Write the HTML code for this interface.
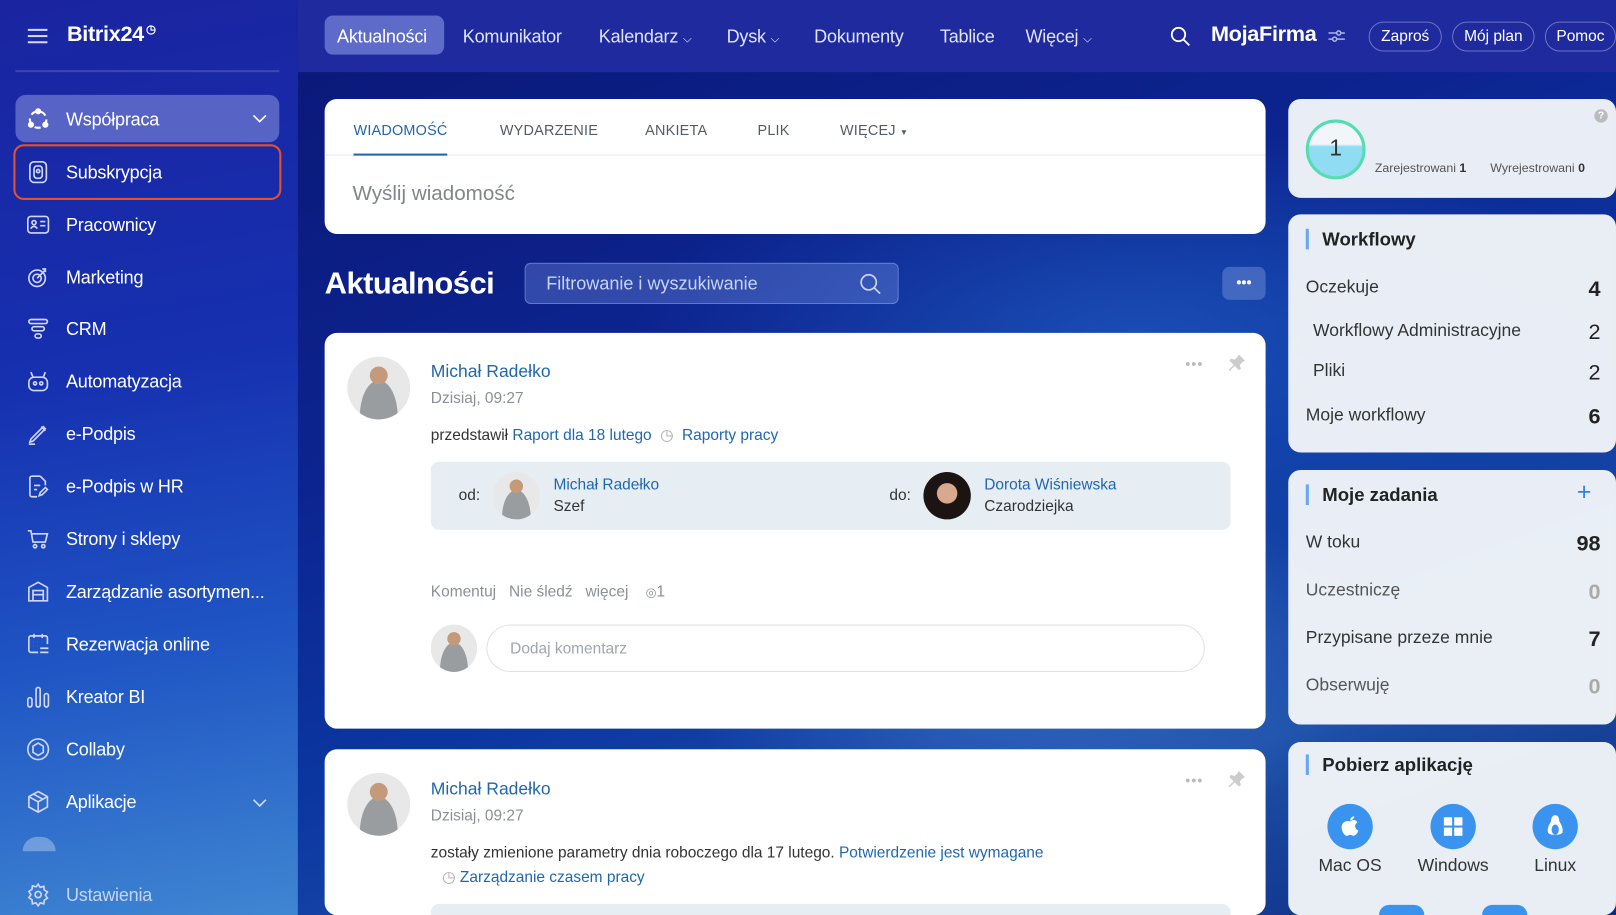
<!DOCTYPE html>
<html><head><meta charset="utf-8">
<style>
*{box-sizing:border-box;margin:0;padding:0}
html,body{width:1616px;height:915px;overflow:hidden;background:#0c1f8a;font-family:"Liberation Sans",sans-serif}
#w{position:absolute;left:0;top:0;width:1568px;height:888px;transform:scale(1.03061);transform-origin:0 0;overflow:hidden;
background:radial-gradient(ellipse 500px 260px at 1000px 640px,rgba(90,150,230,.45),transparent 70%),
radial-gradient(ellipse 700px 300px at 1100px 330px,rgba(40,110,210,.5),transparent 70%),
linear-gradient(160deg,#0a1470 0%,#0c2490 40%,#0b36a0 60%,#1d4fa8 80%,#0d2a80 100%)}
.abs{position:absolute}
#side{left:0;top:0;width:289px;height:888px;background:linear-gradient(170deg,#1a24a0 0%,#1630b0 40%,#1f55c4 70%,#3f86d2 100%)}
.mi{position:absolute;left:25px;height:24px;color:#fff;font-size:17.5px;line-height:24px;display:flex;align-items:center;letter-spacing:-.2px}
.mi svg{width:24px;height:24px;margin-right:15px;flex:none}
#top{left:289px;top:0;width:1279px;height:70px;background:#1e2a9e}
.nav{position:absolute;top:24px;color:#dfe3ff;font-size:17.5px;line-height:22px;letter-spacing:-.2px}
.pill{position:absolute;top:21px;height:29px;border:1px solid rgba(255,255,255,.35);border-radius:15px;color:#fff;font-size:15px;line-height:27px;text-align:center}
.card{position:absolute;background:#fff;border-radius:12px;overflow:hidden}
.rc{position:absolute;background:rgba(243,246,249,.96);border-radius:12px;overflow:hidden}
.blue{color:#2067b0}
.tab{position:absolute;top:22px;font-size:14px;color:#535c69;letter-spacing:.2px}
.row{position:absolute;left:17px;right:15px;font-size:17px;color:#333;display:flex;justify-content:space-between}
.row b{font-size:21px;font-weight:normal;color:#222}
.hd{position:absolute;left:17px;font-size:18px;font-weight:bold;color:#222;padding-left:13px;border-left:3px solid #6aa7f2;line-height:20px}
.av{position:absolute;border-radius:50%;background:radial-gradient(circle at 50% 30%,#c49a7a 0 16%,transparent 17%),radial-gradient(ellipse at 50% 95%,#9a9da0 0 42%,transparent 43%),#e8e8e8;overflow:hidden}
.app{position:absolute;top:60px;width:44px;height:44px;border-radius:50%;background:#3b93f0}
.al{position:absolute;top:110px;font-size:17px;color:#333;width:90px;text-align:center}
.dots{position:absolute;color:#bbb;font-size:14px;letter-spacing:1px}
</style></head><body><div id="w">
<div id="side" class="abs">
 <div class="abs" style="left:27px;top:28px;width:19px;height:2px;background:#cfd6ff;box-shadow:0 6px 0 #cfd6ff,0 12px 0 #cfd6ff"></div>
 <div class="abs" style="left:65px;top:22px;color:#fff;font-size:21px;font-weight:bold;letter-spacing:-.3px">Bitrix24<span style="font-size:11px;vertical-align:top;margin-left:2px">◷</span></div>
 <div class="abs" style="left:15px;top:68px;width:256px;height:2px;background:rgba(255,255,255,.15)"></div>
 <div class="abs" style="left:15px;top:92px;width:256px;height:46px;border-radius:10px;background:rgba(150,160,230,.5)"></div>
 <div class="abs" style="left:13px;top:140px;width:260px;height:54px;border-radius:10px;border:2.5px solid #e8502a"></div>
 <div class="mi" style="top:104px"><svg viewBox="0 0 24 24" fill="none" stroke="#fff" stroke-width="2"><circle cx="12" cy="12" r="8" stroke-dasharray="6 4"/><circle cx="12" cy="4" r="2" fill="#fff"/><circle cx="5" cy="17" r="2" fill="#fff"/><circle cx="19" cy="17" r="2" fill="#fff"/></svg>Współpraca</div>
 <svg class="abs" style="left:245px;top:110px" width="14" height="10" viewBox="0 0 14 10" fill="none" stroke="#fff" stroke-width="1.6"><path d="M1 2l6 6 6-6"/></svg>
 <div class="mi" style="top:155px"><svg viewBox="0 0 24 24" fill="none" stroke="#cfd6ff" stroke-width="1.6"><rect x="4" y="2" width="16" height="20" rx="4"/><rect x="8" y="6" width="8" height="12" rx="3"/><circle cx="12" cy="11" r="1.6"/></svg>Subskrypcja</div>
 <div class="mi" style="top:206px"><svg viewBox="0 0 24 24" fill="none" stroke="#cfd6ff" stroke-width="1.6"><rect x="2" y="4" width="20" height="16" rx="3"/><circle cx="8" cy="10" r="2"/><path d="M5 16c1-3 5-3 6 0M14 9h5M14 13h5"/></svg>Pracownicy</div>
 <div class="mi" style="top:257px"><svg viewBox="0 0 24 24" fill="none" stroke="#cfd6ff" stroke-width="1.6"><circle cx="11" cy="13" r="8"/><circle cx="11" cy="13" r="4"/><path d="M11 13l8-8M16 4h3v3"/></svg>Marketing</div>
 <div class="mi" style="top:307px"><svg viewBox="0 0 24 24" fill="none" stroke="#cfd6ff" stroke-width="1.6"><rect x="3" y="3" width="18" height="4" rx="2"/><rect x="6" y="10" width="12" height="4" rx="2"/><rect x="9" y="17" width="6" height="4" rx="2"/></svg>CRM</div>
 <div class="mi" style="top:358px"><svg viewBox="0 0 24 24" fill="none" stroke="#cfd6ff" stroke-width="1.6"><rect x="3" y="8" width="18" height="13" rx="5"/><circle cx="9" cy="14" r="1.5"/><circle cx="15" cy="14" r="1.5"/><path d="M7 8L5 3M17 8l2-5"/></svg>Automatyzacja</div>
 <div class="mi" style="top:409px"><svg viewBox="0 0 24 24" fill="none" stroke="#cfd6ff" stroke-width="1.6"><path d="M4 20l3-1L19 7l-2-2L5 17zM15 5l4 4M3 22h6"/></svg>e-Podpis</div>
 <div class="mi" style="top:460px"><svg viewBox="0 0 24 24" fill="none" stroke="#cfd6ff" stroke-width="1.6"><path d="M14 2H6a2 2 0 00-2 2v16a2 2 0 002 2h5M14 2l5 5v4M8 11h6M8 15h3M13 21l1-3 5-5 2 2-5 5z"/></svg>e-Podpis w HR</div>
 <div class="mi" style="top:511px"><svg viewBox="0 0 24 24" fill="none" stroke="#cfd6ff" stroke-width="1.6"><path d="M2 4h3l2 11h12l2-8H6"/><circle cx="9" cy="19" r="1.6"/><circle cx="17" cy="19" r="1.6"/></svg>Strony i sklepy</div>
 <div class="mi" style="top:562px"><svg viewBox="0 0 24 24" fill="none" stroke="#cfd6ff" stroke-width="1.6"><path d="M3 21V8l9-5 9 5v13zM7 21V11h10v10M7 15h10"/></svg>Zarządzanie asortymen...</div>
 <div class="mi" style="top:613px"><svg viewBox="0 0 24 24" fill="none" stroke="#cfd6ff" stroke-width="1.6"><path d="M12 20H5a2 2 0 01-2-2V6a2 2 0 012-2h14a2 2 0 012 2v6M8 2v4M16 2v4M14 16h8M14 20h8M7 10h.1M11 10h.1M15 10h.1M7 14h.1M11 14h.1"/></svg>Rezerwacja online</div>
 <div class="mi" style="top:664px"><svg viewBox="0 0 24 24" fill="none" stroke="#cfd6ff" stroke-width="1.6"><rect x="2" y="13" width="4" height="9" rx="2"/><rect x="10" y="3" width="4" height="19" rx="2"/><rect x="18" y="9" width="4" height="13" rx="2"/></svg>Kreator BI</div>
 <div class="mi" style="top:715px"><svg viewBox="0 0 24 24" fill="none" stroke="#cfd6ff" stroke-width="1.6"><circle cx="12" cy="12" r="10"/><path d="M12 6l5 3v6l-5 3-5-3V9z"/></svg>Collaby</div>
 <div class="mi" style="top:766px"><svg viewBox="0 0 24 24" fill="none" stroke="#cfd6ff" stroke-width="1.6"><path d="M12 2l9 5v10l-9 5-9-5V7zM3 7l9 5 9-5M12 12v10M7.5 4.5l9 5"/></svg>Aplikacje</div>
 <svg class="abs" style="left:245px;top:774px" width="14" height="10" viewBox="0 0 14 10" fill="none" stroke="#cfd6ff" stroke-width="1.6"><path d="M1 2l6 6 6-6"/></svg>
 <div class="abs" style="left:22px;top:812px;width:32px;height:14px;border-radius:16px 16px 0 0;background:rgba(255,255,255,.3)"></div>
 <div class="mi" style="top:856px;color:#c5d3f5"><svg viewBox="0 0 24 24" fill="none" stroke="#cfd6ff" stroke-width="1.6"><circle cx="12" cy="12" r="3"/><path d="M12 2l2 3 3.5-1 .5 3.5 3 2-2 3 2 3-3 2-.5 3.5-3.5-1-2 3-2-3-3.5 1L6 17l-3-2 2-3-2-3 3-2 .5-3.5 3.5 1z"/></svg>Ustawienia</div>
</div>

<div id="top" class="abs">
 <div class="abs" style="left:26px;top:15px;width:116px;height:38px;border-radius:8px;background:rgba(150,160,235,.55)"></div>
 <div class="nav" style="left:38px;color:#fff">Aktualności</div>
 <div class="nav" style="left:160px">Komunikator</div>
 <div class="nav" style="left:292px">Kalendarz <span style="font-size:11px">⌵</span></div>
 <div class="nav" style="left:416px">Dysk <span style="font-size:11px">⌵</span></div>
 <div class="nav" style="left:501px">Dokumenty</div>
 <div class="nav" style="left:623px">Tablice</div>
 <div class="nav" style="left:706px">Więcej <span style="font-size:11px">⌵</span></div>
 <svg class="abs" style="left:846px;top:25px" width="20" height="20" viewBox="0 0 20 20" fill="none" stroke="#fff" stroke-width="1.8"><circle cx="8.5" cy="8.5" r="6.5"/><path d="M13.5 13.5L19 19"/></svg>
 <div class="abs" style="left:886px;top:22px;color:#fff;font-size:21px;font-weight:bold;letter-spacing:-.3px">MojaFirma</div>
 <svg class="abs" style="left:1000px;top:28px" width="16" height="14" viewBox="0 0 16 14" fill="none" stroke="#aab4e8" stroke-width="1.5"><path d="M0 4h16M0 10h16"/><circle cx="10" cy="4" r="2" fill="#1e2a9e"/><circle cx="6" cy="10" r="2" fill="#1e2a9e"/></svg>
 <div class="pill" style="left:1039px;width:71px">Zaproś</div>
 <div class="pill" style="left:1120px;width:80px">Mój plan</div>
 <div class="pill" style="left:1210px;width:69px">Pomoc</div>
</div>

<div class="card" style="left:315px;top:96px;width:913px;height:131px">
 <div class="tab" style="left:28px;color:#2067b0">WIADOMOŚĆ</div>
 <div class="tab" style="left:170px">WYDARZENIE</div>
 <div class="tab" style="left:311px">ANKIETA</div>
 <div class="tab" style="left:420px">PLIK</div>
 <div class="tab" style="left:500px">WIĘCEJ <span style="font-size:8px">▼</span></div>
 <div class="abs" style="left:0;top:54px;width:913px;height:1px;background:#e8ebee"></div>
 <div class="abs" style="left:28px;top:53px;width:91px;height:2px;background:#2067b0"></div>
 <div class="abs" style="left:27px;top:81px;font-size:20px;color:#80868e">Wyślij wiadomość</div>
</div>

<div class="abs" style="left:315px;top:259px;color:#fff;font-size:30px;font-weight:bold;letter-spacing:-.5px">Aktualności</div>
<div class="abs" style="left:509px;top:255px;width:363px;height:40px;border-radius:6px;background:rgba(120,150,230,.35);border:1px solid rgba(160,190,255,.4)"></div>
<div class="abs" style="left:530px;top:265px;color:#c8d4f4;font-size:17.5px">Filtrowanie i wyszukiwanie</div>
<svg class="abs" style="left:834px;top:265px" width="21" height="21" viewBox="0 0 20 20" fill="none" stroke="#c8d4f4" stroke-width="1.6"><circle cx="8.5" cy="8.5" r="7"/><path d="M13.5 13.5L19 19"/></svg>
<div class="abs" style="left:1186px;top:259px;width:42px;height:32px;border-radius:7px;background:rgba(120,150,220,.45);color:#fff;text-align:center;font-size:14px;line-height:30px;font-weight:bold">•••</div>

<div class="card" style="left:315px;top:323px;width:913px;height:384px">
 <div class="av" style="left:22px;top:23px;width:61px;height:61px"></div>
 <div class="abs blue" style="left:103px;top:28px;font-size:17px">Michał Radełko</div>
 <div class="abs" style="left:103px;top:55px;font-size:15px;color:#8a9099">Dzisiaj, 09:27</div>
 <div class="dots" style="left:835px;top:22px">•••</div>
 <svg class="abs" style="left:876px;top:20px" width="18" height="18" viewBox="0 0 18 18" fill="#ccc"><path d="M11 1l6 6-2 1-3 3 1 4-2 1-4-4-5 5-1-1 5-5-4-4 1-2 4 1 3-3z"/></svg>
 <div class="abs" style="left:103px;top:90px;font-size:15px;color:#333">przedstawił <span class="blue">Raport dla 18 lutego</span> <span style="color:#aaa;margin:0 4px">◷</span> <span class="blue">Raporty pracy</span></div>
 <div class="abs" style="left:103px;top:125px;width:776px;height:66px;border-radius:8px;background:#e6eef3">
  <div class="abs" style="left:27px;top:24px;font-size:15px;color:#333">od:</div>
  <div class="av" style="left:60px;top:10px;width:46px;height:46px"></div>
  <div class="abs blue" style="left:119px;top:14px;font-size:15px">Michał Radełko</div>
  <div class="abs" style="left:119px;top:35px;font-size:15px;color:#333">Szef</div>
  <div class="abs" style="left:445px;top:24px;font-size:15px;color:#333">do:</div>
  <div class="abs" style="left:478px;top:10px;width:46px;height:46px;border-radius:50%;background:radial-gradient(circle at 50% 45%,#d8a98f 0 28%,#1b1412 30%)"></div>
  <div class="abs blue" style="left:537px;top:14px;font-size:15px">Dorota Wiśniewska</div>
  <div class="abs" style="left:537px;top:35px;font-size:15px;color:#333">Czarodziejka</div>
 </div>
 <div class="abs" style="left:103px;top:243px;font-size:15px;color:#8a9099">Komentuj &nbsp; Nie śledź &nbsp; więcej &nbsp;&nbsp; <span style="font-size:12px">◎</span>1</div>
 <div class="av" style="left:103px;top:283px;width:45px;height:46px"></div>
 <div class="abs" style="left:157px;top:283px;width:697px;height:46px;border-radius:23px;border:1px solid #dfe3e6"></div>
 <div class="abs" style="left:180px;top:298px;font-size:15px;color:#a0a6ad">Dodaj komentarz</div>
</div>

<div class="card" style="left:315px;top:727px;width:913px;height:161px">
 <div class="av" style="left:22px;top:23px;width:61px;height:61px"></div>
 <div class="abs blue" style="left:103px;top:29px;font-size:17px">Michał Radełko</div>
 <div class="abs" style="left:103px;top:56px;font-size:15px;color:#8a9099">Dzisiaj, 09:27</div>
 <div class="dots" style="left:835px;top:22px">•••</div>
 <svg class="abs" style="left:876px;top:20px" width="18" height="18" viewBox="0 0 18 18" fill="#ccc"><path d="M11 1l6 6-2 1-3 3 1 4-2 1-4-4-5 5-1-1 5-5-4-4 1-2 4 1 3-3z"/></svg>
 <div class="abs" style="left:103px;top:92px;font-size:15px;color:#333">zostały zmienione parametry dnia roboczego dla 17 lutego. <span class="blue">Potwierdzenie jest wymagane</span></div>
 <div class="abs" style="left:114px;top:115px;font-size:15px"><span style="color:#aaa">◷</span> <span class="blue">Zarządzanie czasem pracy</span></div>
 <div class="abs" style="left:103px;top:150px;width:776px;height:11px;border-radius:8px 8px 0 0;background:#e6eef3"></div>
</div>

<div class="rc" style="left:1250px;top:96px;width:318px;height:96px">
 <div class="abs" style="left:17px;top:20px;width:58px;height:58px;border-radius:50%;border:3px solid #55dcb4;background:linear-gradient(#f3f6f9 40%,#8fdcf3 45%);text-align:center;line-height:50px;font-size:22px;color:#333">1</div>
 <div class="abs" style="left:84px;top:60px;font-size:12px;color:#555">Zarejestrowani <b style="color:#333">1</b></div>
 <div class="abs" style="left:196px;top:60px;font-size:12px;color:#555">Wyrejestrowani <b style="color:#333">0</b></div>
 <div class="abs" style="left:297px;top:10px;width:13px;height:13px;border-radius:50%;background:#bbb;color:#fff;font-size:10px;text-align:center;line-height:13px;font-weight:bold">?</div>
</div>

<div class="rc" style="left:1250px;top:208px;width:318px;height:231px">
 <div class="hd" style="top:14px">Workflowy</div>
 <div class="row" style="top:61px;width:286px">Oczekuje<b style="font-weight:bold">4</b></div>
 <div class="row" style="top:103px;left:24px;width:279px">Workflowy Administracyjne<b>2</b></div>
 <div class="row" style="top:142px;left:24px;width:279px">Pliki<b>2</b></div>
 <div class="row" style="top:185px;width:286px">Moje workflowy<b style="font-weight:bold">6</b></div>
</div>

<div class="rc" style="left:1250px;top:456px;width:318px;height:247px">
 <div class="hd" style="top:14px">Moje zadania</div>
 <div class="abs" style="left:280px;top:8px;color:#2f80ed;font-size:24px">+</div>
 <div class="row" style="top:60px;width:286px">W toku<b style="font-weight:bold">98</b></div>
 <div class="row" style="top:107px;width:286px;color:#555">Uczestniczę<b style="color:#aaa;font-weight:bold">0</b></div>
 <div class="row" style="top:153px;width:286px">Przypisane przeze mnie<b style="font-weight:bold">7</b></div>
 <div class="row" style="top:199px;width:286px;color:#555">Obserwuję<b style="color:#aaa;font-weight:bold">0</b></div>
</div>

<div class="rc" style="left:1250px;top:720px;width:318px;height:168px">
 <div class="hd" style="top:12px">Pobierz aplikację</div>
 <div class="app" style="left:38px"><svg width="44" height="44" viewBox="0 0 44 44"><path d="M22 17c2-2 6-2 7 1-3 2-3 6 1 8-1 3-3 5-5 5-1 0-2-1-3-1s-2 1-3 1c-3 0-6-6-5-10 1-4 5-5 8-4zM22 16c0-2 2-4 4-4 0 2-2 4-4 4z" fill="#fff"/></svg></div>
 <div class="al" style="left:15px">Mac OS</div>
 <div class="app" style="left:138px"><svg width="44" height="44" viewBox="0 0 44 44" fill="#fff"><rect x="13" y="13" width="8" height="8"/><rect x="23" y="13" width="8" height="8"/><rect x="13" y="23" width="8" height="8"/><rect x="23" y="23" width="8" height="8"/></svg></div>
 <div class="al" style="left:115px">Windows</div>
 <div class="app" style="left:237px"><svg width="44" height="44" viewBox="0 0 44 44" fill="#fff"><path d="M22 11c3 0 4 3 4 6 2 3 4 7 3 11-2 2-4 2-7 2s-5 0-7-2c-1-4 1-8 3-11 0-3 1-6 4-6z"/><ellipse cx="22" cy="25" rx="3.5" ry="5" fill="#3b93f0"/></svg></div>
 <div class="al" style="left:214px">Linux</div>
 <div class="abs" style="left:88px;top:158px;width:44px;height:10px;border-radius:22px 22px 0 0;background:#3b93f0"></div>
 <div class="abs" style="left:188px;top:158px;width:44px;height:10px;border-radius:22px 22px 0 0;background:#3b93f0"></div>
</div>
</div></body></html>
